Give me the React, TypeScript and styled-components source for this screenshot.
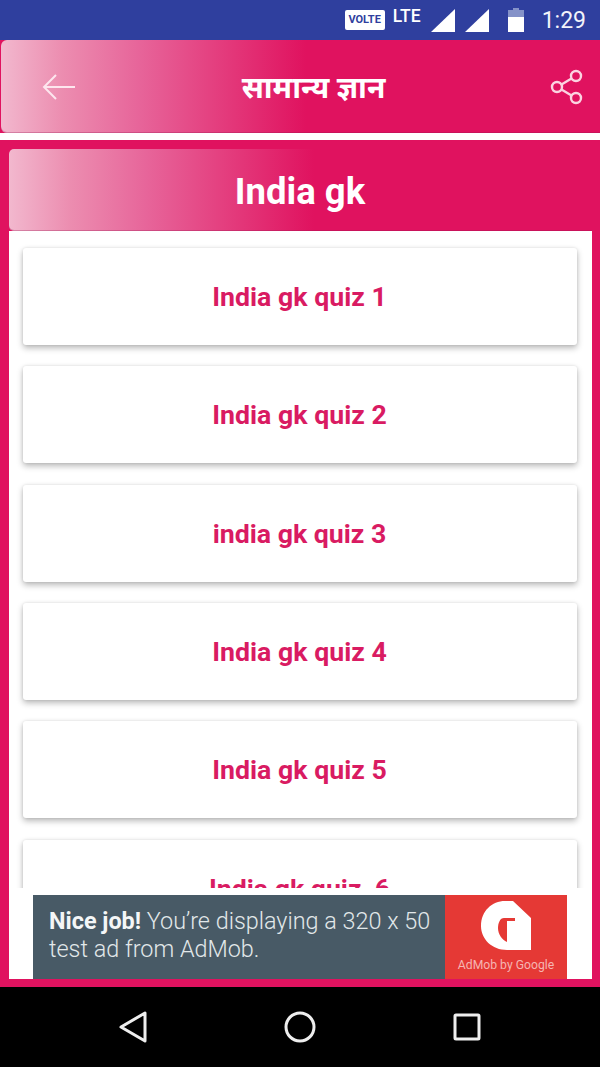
import styled, { createGlobalStyle } from 'styled-components';

const quizzes = ['India gk quiz 1', 'India gk quiz 2', 'india gk quiz 3', 'India gk quiz 4', 'India gk quiz 5', 'India gk quiz  6'];

const App = () => {
    return (
        <Screen>
            <GlobalStyle />
            {/* Status bar */}
            <StatusBar>
                <VolteBadge>VOLTE</VolteBadge>
                <LteLabel>LTE</LteLabel>
                <StatusIcon width="24" height="26" viewBox="0 0 24 26">
                    <path d="M24 2V25H0Z" fill="#fff" />
                </StatusIcon>
                <StatusIcon width="24" height="26" viewBox="0 0 24 26">
                    <path d="M24 2V25H0Z" fill="#fff" />
                </StatusIcon>
                <BatteryIcon width="16" height="26" viewBox="0 0 16 26">
                    <path d="M5 1h6v2h5v7H0V3h5Z" fill="#8592c8" />
                    <path d="M0 10h16v15H0Z" fill="#fff" />
                </BatteryIcon>
                <Clock>1:29</Clock>
            </StatusBar>

            {/* Toolbar */}
            <ToolbarShell>
                <Toolbar>
                    <svg width="36" height="28" viewBox="0 0 36 28" fill="none" stroke="#fde6ee" strokeWidth="2">
                        <path d="M34 14H3M15 2 3 14l12 12" />
                    </svg>
                    <ToolbarTitle>सामान्य ज्ञान</ToolbarTitle>
                    <svg width="34" height="36" viewBox="0 0 34 36" fill="none" stroke="#fbd3e1" strokeWidth="2.4">
                        <circle cx="26" cy="7" r="5" />
                        <circle cx="7" cy="18" r="5" />
                        <circle cx="26" cy="29" r="5" />
                        <path d="M11.5 15.5 21.500 9.500M11.500 20.500l10 6" />
                    </svg>
                </Toolbar>
            </ToolbarShell>

            {/* Main panel */}
            <Panel>
                <PanelHeader>India gk</PanelHeader>
                <PanelBody>
                    <QuizList>
                        {quizzes.map((quiz, index) => (
                            <QuizCard key={index}>{quiz}</QuizCard>
                        ))}
                    </QuizList>
                    <AdSlot>
                        <AdBanner>
                            <AdText>
                                <strong>Nice job!</strong> You’re displaying a 320 x 50 test ad from AdMob.
                            </AdText>
                            <AdLogo>
                                <svg width="50" height="50" viewBox="0 0 50 50">
                                    <path d="M24 0h8l18 17v32H26V20h8v-3H23C19 17 17 22 17 27 17 33 21 39 26 41V49C11 49 0 38 0 25 0 10 11 0 24 0Z" fill="#fff" />
                                </svg>
                                <AdLogoLabel>AdMob by Google</AdLogoLabel>
                            </AdLogo>
                        </AdBanner>
                    </AdSlot>
                </PanelBody>
            </Panel>

            {/* Navigation bar */}
            <NavBar>
                <svg width="30" height="34" viewBox="0 0 30 34" fill="none" stroke="#eee" strokeWidth="3" strokeLinejoin="round">
                    <path d="M27 3v28L3 17Z" />
                </svg>
                <svg width="32" height="32" viewBox="0 0 32 32" fill="none" stroke="#eee" strokeWidth="3">
                    <circle cx="16" cy="16" r="14" />
                </svg>
                <svg width="30" height="30" viewBox="0 0 30 30" fill="none" stroke="#eee" strokeWidth="3" strokeLinejoin="round">
                    <rect x="3" y="3" width="24" height="24" rx="1" />
                </svg>
            </NavBar>
        </Screen>
    );
};

const GlobalStyle = createGlobalStyle`
  html, body {
    margin: 0;
    padding: 0;
    background: white;
  }
  * {
    box-sizing: border-box;
  }
`;

const Screen = styled.div`
  width: 600px;
  height: 1067px;
  display: flex;
  flex-direction: column;
  overflow: hidden;
  font-family: Roboto, 'Noto Sans', sans-serif;
  background: white;
`;

const StatusBar = styled.div`
  height: 40px;
  flex: none;
  background: #2f3f9e;
  display: flex;
  align-items: center;
  justify-content: flex-end;
  padding-right: 14px;
  color: white;
`;

const VolteBadge = styled.div`
  width: 40px;
  height: 20px;
  margin-right: 8px;
  background: white;
  border-radius: 2px;
  color: #2f3f9e;
  font-size: 11px;
  font-weight: 700;
  line-height: 20px;
  text-align: center;
`;

const LteLabel = styled.div`
  width: 30px;
  font-size: 17.500px;
  font-weight: 500;
  margin: -9px 8px 0 0;
  white-space: nowrap;
`;

const StatusIcon = styled.svg`
  margin-right: 10px;
`;

const BatteryIcon = styled.svg`
  margin-left: 9px;
`;

const Clock = styled.div`
  font-size: 23px;
  font-weight: 400;
  margin-left: 18px;
  color: #f2f3fa;
`;

const pinkFade = `linear-gradient(90deg, #f2b8ce 0%, #ec8db0 20%, #e7659a 45%, #e0125f 100%)`;

const ToolbarShell = styled.div`
  height: 93px;
  flex: none;
  margin-bottom: 7px;
  padding-left: 1px;
  background: #e0125f;
`;

const Toolbar = styled.div`
  height: 100%;
  display: flex;
  align-items: center;
  justify-content: space-between;
  padding: 0 16px 0 40px;
  border-radius: 6px 0 0 6px;
  background: ${pinkFade} 0 0 / 305px 100% no-repeat;
  box-shadow: inset 0 -1px 0 rgba(150, 20, 80, 0.3);
`;

const ToolbarTitle = styled.div`
  color: white;
  font-size: 30px;
  font-weight: 700;
`;

const Panel = styled.div`
  height: 847px;
  flex: none;
  background: #e0125f;
  padding: 9px 8px 8px 9px;
  display: flex;
  flex-direction: column;
`;

const PanelHeader = styled.div`
  height: 82px;
  flex: none;
  border-radius: 5px 0 0 5px;
  background: ${pinkFade} 0 0 / 305px 100% no-repeat;
  box-shadow: inset 0 -1px 0 rgba(150, 20, 80, 0.3);
  color: white;
  font-size: 36.500px;
  font-weight: 700;
  line-height: 85px;
  text-align: center;
  padding-right: 1px;
`;

const PanelBody = styled.div`
  flex: 1;
  min-height: 0;
  background: white;
  display: flex;
  flex-direction: column;
`;

const QuizList = styled.div`
  flex: 1;
  min-height: 0;
  overflow: hidden;
  padding: 17px 15px 0 14px;
  display: flex;
  flex-direction: column;
  gap: 21.33px;
`;

const QuizCard = styled.div`
  height: 97px;
  flex: none;
  background: white;
  border-radius: 3px;
  box-shadow: 0 3px 6px rgba(0, 0, 0, 0.28), 0 0 3px rgba(0, 0, 0, 0.1);
  color: #d91b62;
  font-size: 26.700px;
  font-weight: 700;
  line-height: 99px;
  text-align: center;
  white-space: pre;
  padding-right: 1px;
`;

const AdSlot = styled.div`
  height: 91px;
  flex: none;
  padding: 7px 25px 0 24px;
`;

const AdBanner = styled.div`
  height: 84px;
  display: flex;
  background: #485a66;
`;

const AdText = styled.div`
  flex: 1;
  padding: 12px 0 0 16px;
  color: #e2e8ea;
  font-size: 23.400px;
  font-weight: 300;
  line-height: 28px;

  strong {
    font-weight: 700;
    color: #f4f6f7;
  }
`;

const AdLogo = styled.div`
  width: 122px;
  flex: none;
  background: #e53935;
  display: flex;
  flex-direction: column;
  align-items: center;
  padding-top: 6px;
`;

const AdLogoLabel = styled.div`
  margin-top: 7px;
  color: #f5b5b2;
  font-size: 12.200px;
  white-space: nowrap;
`;

const NavBar = styled.div`
  height: 80px;
  flex: none;
  background: black;
  display: flex;
  align-items: center;
  justify-content: space-between;
  padding: 0 118px;
`;

export default App;
